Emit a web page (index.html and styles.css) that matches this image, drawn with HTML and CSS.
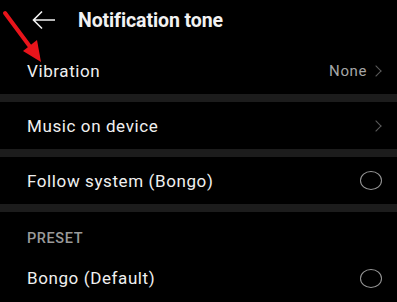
FILE: index.html
```html
<!DOCTYPE html>
<html lang="en">
<head>
    <meta charset="UTF-8">
    <meta name="viewport" content="width=device-width, initial-scale=1.0">
    <title>Notification tone</title>
    <link rel="stylesheet" href="styles.css">
</head>
<body>

    <div class="header">
        <svg class="back" width="24" height="20" viewBox="0 0 24 20">
            <path d="M23 10H2M10 1.5L1.5 10L10 18.5" fill="none" stroke="#f2f2f2" stroke-width="1.6"/>
        </svg>
        <h1>Notification tone</h1>
    </div>

    <div class="row row-first">
        <span class="label">Vibration</span>
        <span class="value">None <span class="chevron"></span></span>
    </div>
    <div class="divider"></div>

    <div class="row">
        <span class="label">Music on device</span>
        <span class="chevron"></span>
    </div>
    <div class="divider"></div>

    <div class="row">
        <span class="label">Follow system (Bongo)</span>
        <span class="radio"></span>
    </div>
    <div class="divider"></div>

    <div class="section-title">PRESET</div>
    <div class="row row-preset">
        <span class="label">Bongo (Default)</span>
        <span class="radio"></span>
    </div>

    <!-- annotation arrow -->
    <svg class="pointer" width="50" height="66" viewBox="0 0 50 66">
        <line x1="5" y1="13" x2="31" y2="48" stroke="#e8141b" stroke-width="4" stroke-linecap="round"/>
        <polygon points="41,62 23,51 37,40" fill="#e8141b"/>
    </svg>

</body>
</html>
```

FILE: styles.css
```css
body {
    margin: 0;
    background: #000;
    font-family: Roboto, "Noto Sans", sans-serif;
    color: #f0f0f0;
    position: relative;
    width: 397px;
    height: 302px;
    overflow: hidden;
}
.header {
    height: 40px;
    display: flex;
    align-items: center;
    padding-left: 32px;
}
.back {
    margin-right: 22px;
}
h1 {
    margin: 0;
    font-size: 19.5px;
    font-weight: bold;
    color: #f2f2f2;
    letter-spacing: -0.1px;
}
.row {
    height: 47px;
    display: flex;
    align-items: center;
    justify-content: space-between;
    padding: 0 15px 0 27px;
}
.row-first {
    height: 46px;
    padding-top: 8px;
}
.label {
    font-size: 17px;
    letter-spacing: 0.6px;
}
.value {
    display: flex;
    align-items: center;
    font-size: 15px;
    letter-spacing: 0.6px;
    color: #a6a6a6;
}
.chevron {
    display: inline-block;
    width: 7px;
    height: 7px;
    border-top: 1.5px solid #5c5c5c;
    border-right: 1.5px solid #5c5c5c;
    transform: rotate(45deg);
    margin-right: 2px;
}
.value .chevron {
    margin-left: 5px;
}
.radio {
    width: 20px;
    height: 17px;
    border: 1.5px solid #979797;
    border-radius: 50%;
}
.divider {
    height: 8px;
    background: #1c1c1c;
}
.section-title {
    font-size: 14.5px;
    font-weight: 500;
    letter-spacing: 0.6px;
    color: #9a9a9a;
    padding: 18px 27px 0;
    height: 24px;
}
.row-preset {
    height: 48px;
}
.pointer {
    position: absolute;
    left: 0;
    top: 0;
}
```
